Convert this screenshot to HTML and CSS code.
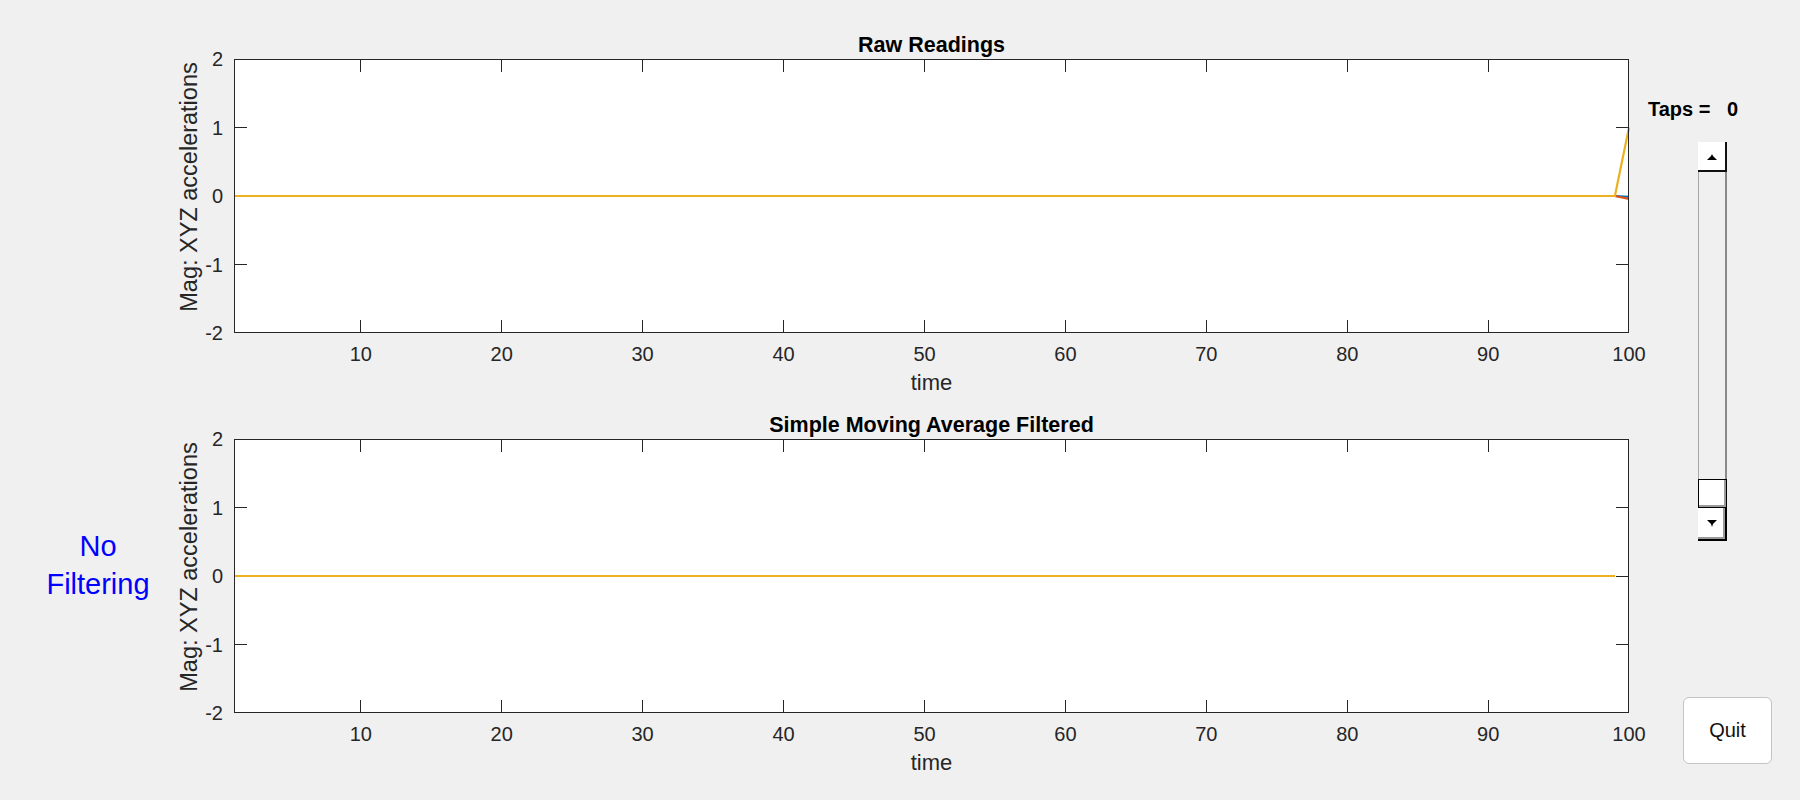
FILE: index.html
```html
<!DOCTYPE html>
<html>
<head>
<meta charset="utf-8">
<title>Filter Demo</title>
<link rel="stylesheet" href="styles.css">
</head>
<body>
<div class="figure">
  <div class="left-col">
    <div class="mode-label">No<br>Filtering</div>
  </div>

  <div class="plots-col">
    <svg class="axes" width="1470" height="380" viewBox="0 0 1470 380">
      <rect class="plot-bg" x="64" y="39" width="1395" height="274"/>
      <g class="ticks">
        <path d="M190.5 39V52M331.5 39V52M472.5 39V52M613.5 39V52M754.5 39V52M895.5 39V52M1036.5 39V52M1177.5 39V52M1318.5 39V52"/>
        <path d="M190.5 313V300M331.5 313V300M472.5 313V300M613.5 313V300M754.5 313V300M895.5 313V300M1036.5 313V300M1177.5 313V300M1318.5 313V300"/>
        <path d="M64 107.5H77M64 176.5H77M64 244.5H77M1459 107.5H1446M1459 176.5H1446M1459 244.5H1446"/>
      </g>
      <polyline class="ln-blue" points="64,176 1444.9,176 1459,176.8"/>
      <polyline class="ln-red" points="64,176 1444.9,176 1459,178.8"/>
      <polyline class="ln-orange" points="64,176 1444.9,176 1459,107.5"/>
      <rect class="plot-box" x="64.5" y="39.5" width="1394" height="273"/>
      <g class="xtl">
        <text x="190.8" y="341">10</text><text x="331.7" y="341">20</text><text x="472.6" y="341">30</text>
        <text x="613.6" y="341">40</text><text x="754.5" y="341">50</text><text x="895.4" y="341">60</text>
        <text x="1036.3" y="341">70</text><text x="1177.3" y="341">80</text><text x="1318.2" y="341">90</text>
        <text x="1459" y="341">100</text>
      </g>
      <g class="ytl">
        <text x="53" y="46">2</text><text x="53" y="114.5">1</text><text x="53" y="183">0</text>
        <text x="53" y="251.5">-1</text><text x="53" y="320">-2</text>
      </g>
      <text class="title" x="761.5" y="32">Raw Readings</text>
      <text class="xlabel" x="761.5" y="370">time</text>
      <text class="ylabel" transform="translate(27,167) rotate(-90)">Mag: XYZ accelerations</text>
    </svg>

    <svg class="axes" width="1470" height="380" viewBox="0 0 1470 380">
      <rect class="plot-bg" x="64" y="39" width="1395" height="274"/>
      <g class="ticks">
        <path d="M190.5 39V52M331.5 39V52M472.5 39V52M613.5 39V52M754.5 39V52M895.5 39V52M1036.5 39V52M1177.5 39V52M1318.5 39V52"/>
        <path d="M190.5 313V300M331.5 313V300M472.5 313V300M613.5 313V300M754.5 313V300M895.5 313V300M1036.5 313V300M1177.5 313V300M1318.5 313V300"/>
        <path d="M64 107.5H77M64 176.5H77M64 244.5H77M1459 107.5H1446M1459 176.5H1446M1459 244.5H1446"/>
      </g>
      <polyline class="ln-blue" points="64,176 1444.9,176"/>
      <polyline class="ln-red" points="64,176 1444.9,176"/>
      <polyline class="ln-orange" points="64,176 1444.9,176"/>
      <rect class="plot-box" x="64.5" y="39.5" width="1394" height="273"/>
      <g class="xtl">
        <text x="190.8" y="341">10</text><text x="331.7" y="341">20</text><text x="472.6" y="341">30</text>
        <text x="613.6" y="341">40</text><text x="754.5" y="341">50</text><text x="895.4" y="341">60</text>
        <text x="1036.3" y="341">70</text><text x="1177.3" y="341">80</text><text x="1318.2" y="341">90</text>
        <text x="1459" y="341">100</text>
      </g>
      <g class="ytl">
        <text x="53" y="46">2</text><text x="53" y="114.5">1</text><text x="53" y="183">0</text>
        <text x="53" y="251.5">-1</text><text x="53" y="320">-2</text>
      </g>
      <text class="title" x="761.5" y="32">Simple Moving Average Filtered</text>
      <text class="xlabel" x="761.5" y="370">time</text>
      <text class="ylabel" transform="translate(27,167) rotate(-90)">Mag: XYZ accelerations</text>
    </svg>
  </div>

  <div class="controls-col">
    <div class="taps">Taps =   0</div>
    <div class="slider">
      <div class="sl-btn sl-up">
        <svg width="12" height="7" viewBox="0 0 12 7"><path d="M6 0L7 2L11 6H1L5 2Z" fill="#000"/></svg>
      </div>
      <div class="sl-track"></div>
      <div class="sl-thumb"></div>
      <div class="sl-btn sl-down">
        <svg width="12" height="7" viewBox="0 0 12 7"><path d="M1 0H11L7 4L6 7L5 4Z" fill="#000"/></svg>
      </div>
    </div>
    <button class="quit">Quit</button>
  </div>
</div>
</body>
</html>
```

FILE: styles.css
```css
html, body {
  margin: 0;
  padding: 0;
  background: #f0f0f0;
}

.figure {
  display: flex;
  width: 1800px;
  height: 800px;
  overflow: hidden;
  background: #f0f0f0;
  font-family: "Liberation Sans", Arial, Helvetica, sans-serif;
}

.left-col {
  width: 144px;
  flex: 0 0 144px;
  padding-left: 26px;
  padding-top: 527px;
}

.mode-label {
  color: #0000ff;
  font-size: 29px;
  line-height: 38px;
  text-align: center;
}

.plots-col {
  width: 1470px;
  flex: 0 0 1470px;
  padding-top: 20px;
  display: flex;
  flex-direction: column;
}

.axes {
  display: block;
  overflow: visible;
  font-family: "Liberation Sans", Arial, Helvetica, sans-serif;
}

.plot-bg {
  fill: #ffffff;
}

.plot-box {
  fill: none;
  stroke: #262626;
  stroke-width: 1;
}

.ticks path {
  stroke: #262626;
  stroke-width: 1;
  fill: none;
}

.ln-blue, .ln-red, .ln-orange {
  fill: none;
  stroke-width: 2.2;
  stroke-linejoin: round;
}
.ln-blue { stroke: #0072bd; }
.ln-red { stroke: #d95319; }
.ln-orange { stroke: #edb120; }

.xtl text {
  font-size: 20px;
  fill: #262626;
  text-anchor: middle;
}

.ytl text {
  font-size: 20px;
  fill: #262626;
  text-anchor: end;
}

.title {
  font-size: 21.5px;
  font-weight: bold;
  fill: #000;
  text-anchor: middle;
}

.xlabel {
  font-size: 22px;
  fill: #262626;
  text-anchor: middle;
}

.ylabel {
  font-size: 23.5px;
  fill: #262626;
  text-anchor: middle;
}

.controls-col {
  width: 160px;
  flex: 0 0 160px;
  padding-top: 98px;
  display: flex;
  flex-direction: column;
  align-items: flex-start;
}

.taps {
  font-size: 20px;
  font-weight: bold;
  line-height: 22px;
  color: #000;
  white-space: pre;
  padding-left: 8px;
}

.slider {
  margin-top: 22px;
  margin-left: 58px;
  width: 29px;
  height: 399px;
  display: flex;
  flex-direction: column;
}

.sl-btn {
  box-sizing: border-box;
  background: #fff;
  display: flex;
  align-items: center;
  justify-content: center;
}

.sl-up {
  height: 30px;
  border-right: 2px solid #111;
  border-bottom: 2px solid #111;
  padding-top: 2px;
}

.sl-track {
  flex: 1 1 auto;
  box-sizing: border-box;
  background: #f0f0f0;
  border-left: 1px solid #a8a8a8;
  border-right: 2px solid #8a8a8a;
}

.sl-thumb {
  height: 29px;
  box-sizing: border-box;
  background: #fff;
  border: 1px solid #000;
  box-shadow: inset -2px -2px 0 #9a9a9a;
}

.sl-down {
  height: 33px;
  border-right: 2px solid #000;
  border-bottom: 2px solid #000;
  box-shadow: inset -2px -2px 0 #9a9a9a;
}

.quit {
  margin-top: 156px;
  margin-left: 43px;
  width: 89px;
  height: 67px;
  box-sizing: border-box;
  background: #fff;
  border: 1px solid #c4c4c4;
  border-radius: 6px;
  font-family: "Liberation Sans", Arial, Helvetica, sans-serif;
  font-size: 20px;
  color: #111;
  padding: 0;
}
```
